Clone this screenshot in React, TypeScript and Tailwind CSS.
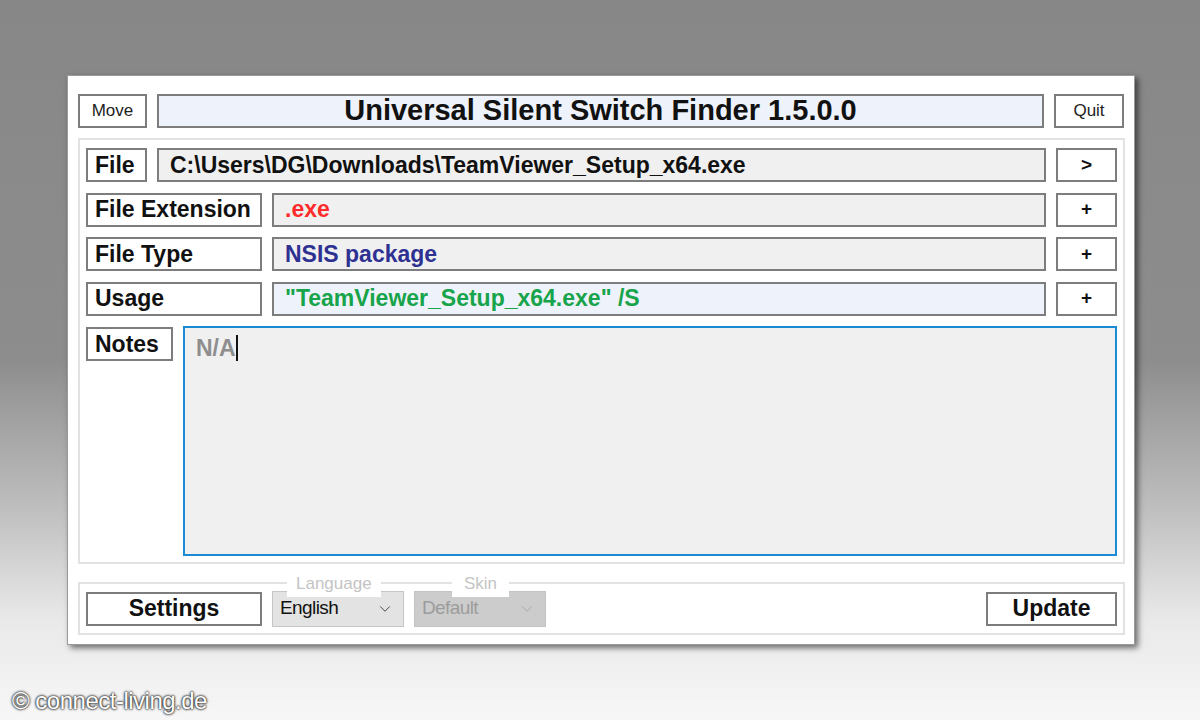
import { ChevronDown } from 'lucide-react';

const font = "font-['Liberation_Sans',Arial,sans-serif]";

function Box({ children, className = '' }: { children?: React.ReactNode; className?: string }) {
  return (
    <div className={`border-2 border-[#7d7d7d] flex items-center ${className}`}>
      {children}
    </div>
  );
}

function Row({ label, value, color, bg = 'bg-[#f0f0f0]', btn = '+' }: { label: string; value: string; color: string; bg?: string; btn?: string }) {
  return (
    <div className="flex h-[34px] gap-[10px]">
      <Box className="w-[176px] bg-white px-[7px] text-[23px] font-bold text-[#111]">{label}</Box>
      <Box className={`flex-1 ${bg} px-[11px] text-[23px] font-bold ${color}`}>{value}</Box>
      <Box className="w-[61px] bg-white justify-center text-[19px] font-bold text-[#111]">{btn}</Box>
    </div>
  );
}

export default function App() {
  return (
    <div className={`relative w-[1200px] h-[720px] overflow-hidden pt-[75px] pl-[67px] ${font} bg-[linear-gradient(to_bottom,#878787_0%,#8d8d8d_50%,#bdbdbd_70%,#e9e9e9_86%,#f7f7f7_100%)]`}>
      {/* Window */}
      <div className="w-[1068px] h-[570px] bg-white border border-[#9a9a9a] shadow-[3px_3px_6px_rgba(0,0,0,0.55)] flex flex-col pt-[18px] px-[10px] pb-[9px]">
        {/* Title bar */}
        <div className="flex h-[34px] gap-[10px]">
          <Box className="w-[69px] bg-white justify-center text-[17px] text-[#222]">Move</Box>
          <Box className="flex-1 bg-[#eef2fa] justify-center text-[29px] font-bold text-[#111]">
            Universal Silent Switch Finder 1.5.0.0
          </Box>
          <Box className="w-[70px] bg-white justify-center text-[17px] text-[#222]">Quit</Box>
        </div>

        {/* Main panel */}
        <div className="mt-[10px] w-[1047px] border-2 border-[#e2e2e2] flex flex-col gap-[10.5px] pt-[8px] px-[6px] pb-[6px]">
          <div className="flex h-[34px] gap-[10px]">
            <Box className="w-[61px] bg-white px-[7px] text-[23px] font-bold text-[#111]">File</Box>
            <Box className="flex-1 bg-[#f0f0f0] px-[11px] text-[23px] font-bold text-[#111]">
              C:\Users\DG\Downloads\TeamViewer_Setup_x64.exe
            </Box>
            <Box className="w-[61px] bg-white justify-center text-[19px] font-bold text-[#111]">&gt;</Box>
          </div>
          <Row label="File Extension" value=".exe" color="text-[#ff2b2b]" />
          <Row label="File Type" value="NSIS package" color="text-[#2e3192]" />
          <Row label="Usage" value={'"TeamViewer_Setup_x64.exe" /S'} color="text-[#17a44a]" bg="bg-[#eef2fa]" />
          <div className="flex gap-[10px]">
            <Box className="w-[87px] h-[34px] mt-[1px] bg-white px-[7px] text-[23px] font-bold text-[#111]">Notes</Box>
            <div className="flex-1 h-[230px] border-2 border-[#1a8ad4] bg-[#f0f0f0] px-[11px] pt-[3px] text-[23px] font-bold text-[#8e8e8e]">
              N/A<span className="inline-block w-[2px] h-[26px] bg-[#111] align-[-5px]" />
            </div>
          </div>
        </div>

        {/* Bottom panel */}
        <div className="relative mt-auto w-[1047px] h-[53px] border-2 border-[#e2e2e2] flex items-center px-[6px] gap-[10px]">
          <span className="absolute -top-[13px] left-[207px] bg-white px-[9px] text-[17px] text-[#c4c4c4]">Language</span>
          <span className="absolute -top-[13px] left-[372px] bg-white px-[12px] text-[17px] text-[#c4c4c4]">Skin</span>
          <Box className="w-[176px] h-[34px] bg-white justify-center text-[23px] font-bold text-[#111]">Settings</Box>
          <div className="w-[132px] h-[36px] bg-[#e3e3e3] border border-[#c6c6c6] flex items-center justify-between pl-[7px] pr-[9px] text-[19px] text-[#111] tracking-[-0.6px]">
            English
            <ChevronDown size={18} strokeWidth={1.3} className="text-[#444]" />
          </div>
          <div className="w-[132px] h-[36px] bg-[#cccccc] border border-[#c4c4c4] flex items-center justify-between pl-[7px] pr-[9px] text-[19px] text-[#9c9c9c] tracking-[-0.6px]">
            Default
            <ChevronDown size={18} strokeWidth={1.3} className="text-[#a8a8a8]" />
          </div>
          <Box className="ml-auto w-[131px] h-[34px] bg-white justify-center text-[23px] font-bold text-[#111]">Update</Box>
        </div>
      </div>

      {/* Watermark */}
      <div className="absolute left-[12px] top-[683px] text-[24px] text-white tracking-[-0.5px] [text-shadow:0_0_3px_#000,0_0_2px_#000]">
        © connect-living.de
      </div>
    </div>
  );
}
